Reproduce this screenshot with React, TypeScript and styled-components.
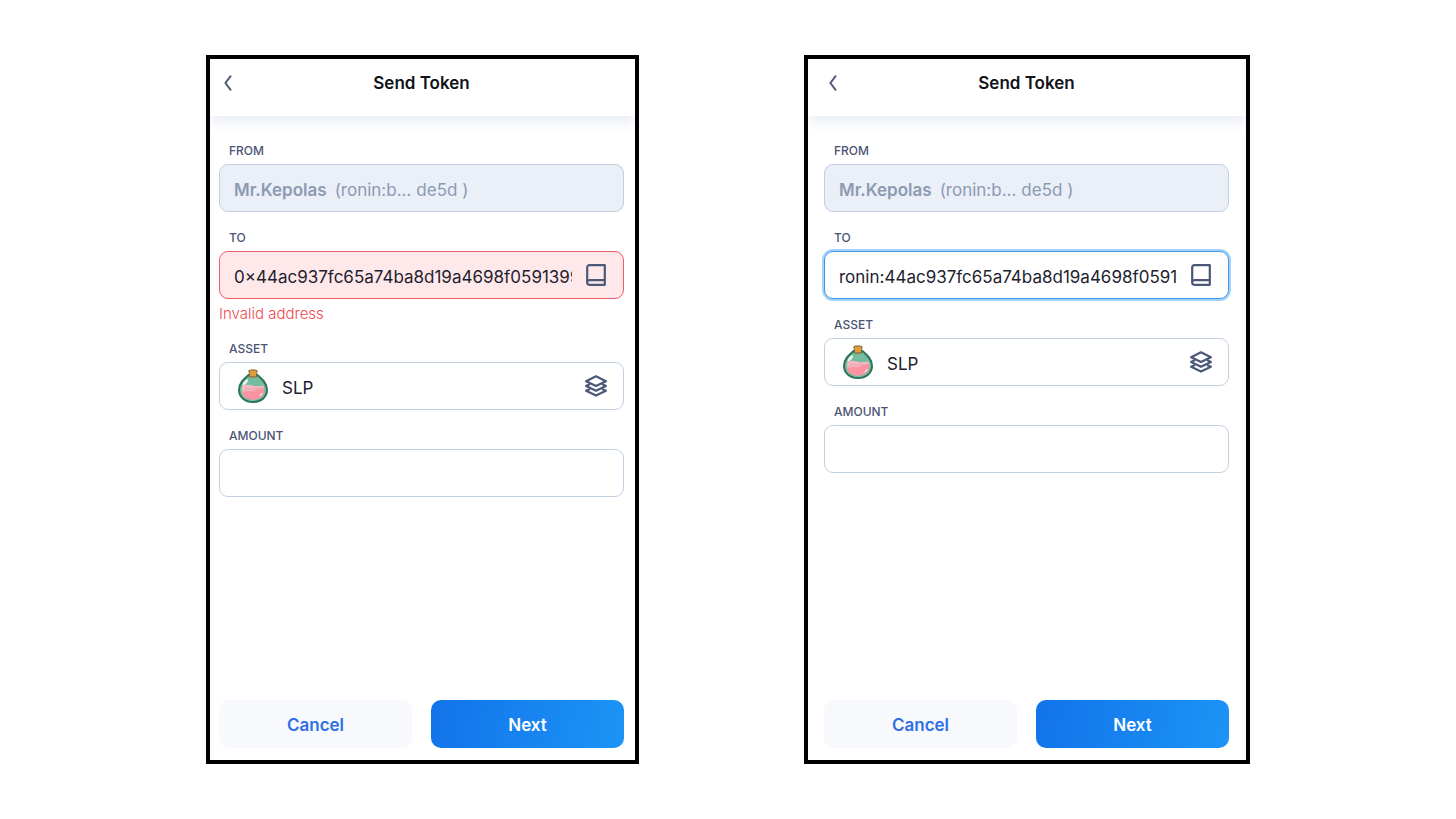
import React, { useState } from "react";
import styled, { createGlobalStyle, css } from "styled-components";

const GlobalStyle = createGlobalStyle`
  *, *::before, *::after { box-sizing: border-box; }
  body {
    margin: 0;
    background: #ffffff;
    color: #1d222e;
    font-family: Inter, "Liberation Sans", sans-serif;
  }
  button, input, output { font: inherit; color: inherit; }
`;

const Page = styled.main`
  min-height: 100vh;
  padding: 55px 24px;
  display: flex;
  justify-content: center;
  gap: 165px;
`;

interface Inset {
  left: number;
  right: number;
}

const Panel = styled.form<{ $basis: number }>`
  flex: 0 1 ${(p) => p.$basis}px;
  min-width: 0;
  display: flex;
  flex-direction: column;
  border: 4px solid #000000;
  background: #ffffff;
`;

const Header = styled.header<{ $inset: Inset }>`
  height: 57px;
  padding: 0 ${(p) => p.$inset.right}px 9px ${(p) => p.$inset.left}px;
  display: grid;
  grid-template-columns: 18px 1fr 18px;
  align-items: center;
  box-shadow: 0 4px 14px rgba(176, 192, 220, 0.36);
  clip-path: inset(0 0 -24px 0);
`;

const BackButton = styled.button`
  height: 24px;
  padding: 0;
  border: 0;
  background: none;
  display: flex;
  align-items: center;
  justify-content: center;
  cursor: pointer;
`;

const Title = styled.h1`
  margin: 0;
  font-size: 17px;
  line-height: 24px;
  font-weight: 600;
  text-align: center;
  color: #11131a;
`;

const Fields = styled.div<{ $inset: Inset }>`
  flex: 1;
  padding: 27px ${(p) => p.$inset.right}px 24px ${(p) => p.$inset.left}px;
  display: flex;
  flex-direction: column;
  gap: 18px;
`;

const FieldGroup = styled.div`
  display: flex;
  flex-direction: column;
`;

const Label = styled.label`
  padding-left: 10px;
  margin-bottom: 5px;
  font-size: 12px;
  line-height: 16px;
  font-weight: 500;
  text-transform: uppercase;
  color: #4b5474;
`;

type Tone = "plain" | "muted" | "error" | "focus";

const tones = {
  plain: css`
    border-color: #c3d0e2;
    background: #ffffff;
  `,
  muted: css`
    border-color: #c0cee4;
    background: #ebeff7;
    color: #8c9ab3;
  `,
  error: css`
    border-color: #ec5f68;
    background: #ffe8ea;
  `,
  focus: css`
    border-color: #3f97ea;
    background: #ffffff;
    box-shadow: 0 0 0 2px #a4d3fa;
  `,
};

const box = css<{ $tone?: Tone }>`
  width: 100%;
  height: 48px;
  padding: 0 15px 0 14px;
  border: 1px solid;
  border-radius: 9px;
  display: flex;
  align-items: center;
  font-size: 17px;
  font-weight: 400;
  line-height: 24px;
  ${(p) => tones[p.$tone ?? "plain"]}
`;

const ReadOnlyBox = styled.output`
  ${box}
  padding-top: 3px;
  gap: 8px;
`;

const AccountName = styled.strong`
  font-weight: 600;
`;

const AccountAddress = styled.span`
  display: flex;
  gap: 5px;
`;

const InputBox = styled.div`
  ${box}
  gap: 12px;
`;

const TextInput = styled.input`
  flex: 1;
  min-width: 0;
  height: 28px;
  padding: 3px 0 0;
  border: 0;
  outline: 0;
  background: transparent;
`;

const IconButton = styled.button`
  flex: none;
  width: 24px;
  height: 24px;
  padding: 0;
  border: 0;
  background: none;
  cursor: pointer;
`;

const AssetPicker = styled.button`
  ${box}
  padding-left: 18px;
  gap: 14px;
  text-align: left;
  cursor: pointer;
`;

const AssetName = styled.span`
  flex: 1;
  padding-top: 3px;
`;

const ErrorText = styled.p`
  margin: 5px 0 0;
  font-size: 15px;
  line-height: 19px;
  font-weight: 300;
  color: #ee4a50;
`;

const Footer = styled.footer<{ $inset: Inset }>`
  padding: 0 ${(p) => p.$inset.right}px 12px ${(p) => p.$inset.left}px;
  display: grid;
  grid-template-columns: 1fr 1fr;
  gap: 19px;
`;

const ActionButton = styled.button<{ $primary?: boolean }>`
  height: 48px;
  padding: 1px 0 0;
  border: 0;
  border-radius: 10px;
  font-size: 17px;
  line-height: 24px;
  font-weight: 600;
  cursor: pointer;
  color: ${(p) => (p.$primary ? "#ffffff" : "#2f6fe4")};
  background: ${(p) =>
    p.$primary ? "linear-gradient(100deg, #1273ea 0%, #1c94f6 100%)" : "#f7f9fd"};
`;

const ChevronIcon = () => (
  <svg width="10" height="18" viewBox="0 0 10 18" fill="none" stroke="#515b78" strokeWidth="2" aria-hidden="true">
    <path d="M7.6 2.2 2.4 9l5.2 6.8" strokeLinecap="round" strokeLinejoin="round" />
  </svg>
);

const BookIcon = () => (
  <svg width="24" height="24" viewBox="0 0 24 24" fill="none" stroke="#4c587a" strokeWidth="2.2" display="block" aria-hidden="true">
    <path d="M20.8 2.2H5.4a2.2 2.2 0 0 0-2.2 2.2v15.2a2.2 2.2 0 0 0 2.2 2.2h15.4z" strokeLinejoin="round" />
    <path d="M3.4 18.4c.3-.9 1-1.3 2-1.3h15.4" />
  </svg>
);

const LayersIcon = () => (
  <svg width="24" height="24" viewBox="0 0 24 24" fill="none" stroke="#4c587a" strokeWidth="2.2" strokeLinejoin="round" aria-hidden="true">
    <path d="M12 2.3 21.9 7.2 12 12 2.1 7.2z" />
    <path d="M6 10.1 2.1 12 12 16.8l9.9-4.8-3.9-1.9" />
    <path d="M6 14.9 2.1 16.8 12 21.6l9.9-4.8-3.9-1.9" />
  </svg>
);

const PotionIcon = () => (
  <svg width="30" height="34" viewBox="0 0 30 34" aria-hidden="true">
    <path
      d="M10.5 6C6.5 9.5 1 14 1 20.8 1 28.2 7 33 15 33s14-4.8 14-12.2C29 14 23.5 9.5 19.5 6z"
      fill="#75bda0"
      stroke="#2f7459"
      strokeWidth="2"
    />
    <path d="M4.5 16.5c3-1.2 6.5-.8 9.5 0 3.5.9 7 .6 11.5 0 2.2 8-2.500 14-10.500 14S2.400 24.500 4.500 16.500z" fill="#f9b8c0" />
    <path d="M3.8 23.5c2.8-.4 5-2.4 7.8-1.6 2.4.6 3.6.4 6-1.2 2.8-1.7 5.3-2 8.7-1.2.6 6.8-4 11-11.1 11-6 0-10.2-2.5-11.4-7z" fill="#fb93a3" />
    <path d="m5 22.2 4.5-3.2 4 2 5-2.8 2.5 1.6 4.5-1.6" fill="none" stroke="#dfaeb0" strokeWidth="1.2" />
    <path d="M8.4 10.6c-2.4 1.6-4 3.8-4 5.6 2.6.4 5.3-2.6 5.6-5 0-.7-.6-1.2-1.6-.6z" fill="#e6f7f0" />
    <path d="M21.5 27.5c2-.6 3-1.9 3.3-3.5-1.8.2-3.5 1.6-3.3 3.5z" fill="#ffd5d8" />
    <path d="M11 1.5C12.500.7 17.500.7 19 1.500v2l-.5 1v3.500h-7V4.500l-.5-1z" fill="#dd9c3d" stroke="#7d6133" strokeWidth="1" />
  </svg>
);

interface SendTokenProps {
  id: string;
  width: number;
  inset: Inset;
  initialAddress: string;
  tone: Tone;
  error?: string;
}

function SendToken({ id, width, inset, initialAddress, tone, error }: SendTokenProps) {
  const [address, setAddress] = useState(initialAddress);
  const [amount, setAmount] = useState("");

  return (
    <Panel $basis={width} onSubmit={(e) => e.preventDefault()}>
      <Header $inset={inset}>
        <BackButton type="button" aria-label="Back">
          <ChevronIcon />
        </BackButton>
        <Title>Send Token</Title>
      </Header>

      <Fields $inset={inset}>
        <FieldGroup>
          <Label htmlFor={`${id}-from`}>From</Label>
          <ReadOnlyBox id={`${id}-from`} $tone="muted">
            <AccountName>Mr.Kepolas</AccountName>
            <AccountAddress>
              <span>(ronin:b...</span>
              <span>de5d )</span>
            </AccountAddress>
          </ReadOnlyBox>
        </FieldGroup>

        <FieldGroup>
          <Label htmlFor={`${id}-to`}>To</Label>
          <InputBox $tone={tone}>
            <TextInput
              id={`${id}-to`}
              value={address}
              spellCheck={false}
              aria-invalid={Boolean(error)}
              onChange={(e) => setAddress(e.target.value)}
            />
            <IconButton type="button" aria-label="Address book">
              <BookIcon />
            </IconButton>
          </InputBox>
          {error && <ErrorText>{error}</ErrorText>}
        </FieldGroup>

        <FieldGroup>
          <Label htmlFor={`${id}-asset`}>Asset</Label>
          <AssetPicker id={`${id}-asset`} type="button">
            <PotionIcon />
            <AssetName>SLP</AssetName>
            <LayersIcon />
          </AssetPicker>
        </FieldGroup>

        <FieldGroup>
          <Label htmlFor={`${id}-amount`}>Amount</Label>
          <InputBox>
            <TextInput id={`${id}-amount`} value={amount} onChange={(e) => setAmount(e.target.value)} />
          </InputBox>
        </FieldGroup>
      </Fields>

      <Footer $inset={inset}>
        <ActionButton type="button">Cancel</ActionButton>
        <ActionButton type="submit" $primary>
          Next
        </ActionButton>
      </Footer>
    </Panel>
  );
}

export default function App() {
  return (
    <>
      <GlobalStyle />
      <Page>
        <SendToken
          id="hex"
          width={433}
          inset={{ left: 9, right: 11 }}
          initialAddress="0×44ac937fc65a74ba8d19a4698f0591399"
          tone="error"
          error="Invalid address"
        />
        <SendToken
          id="ronin"
          width={446}
          inset={{ left: 16, right: 17 }}
          initialAddress="ronin:44ac937fc65a74ba8d19a4698f0591"
          tone="focus"
        />
      </Page>
    </>
  );
}
